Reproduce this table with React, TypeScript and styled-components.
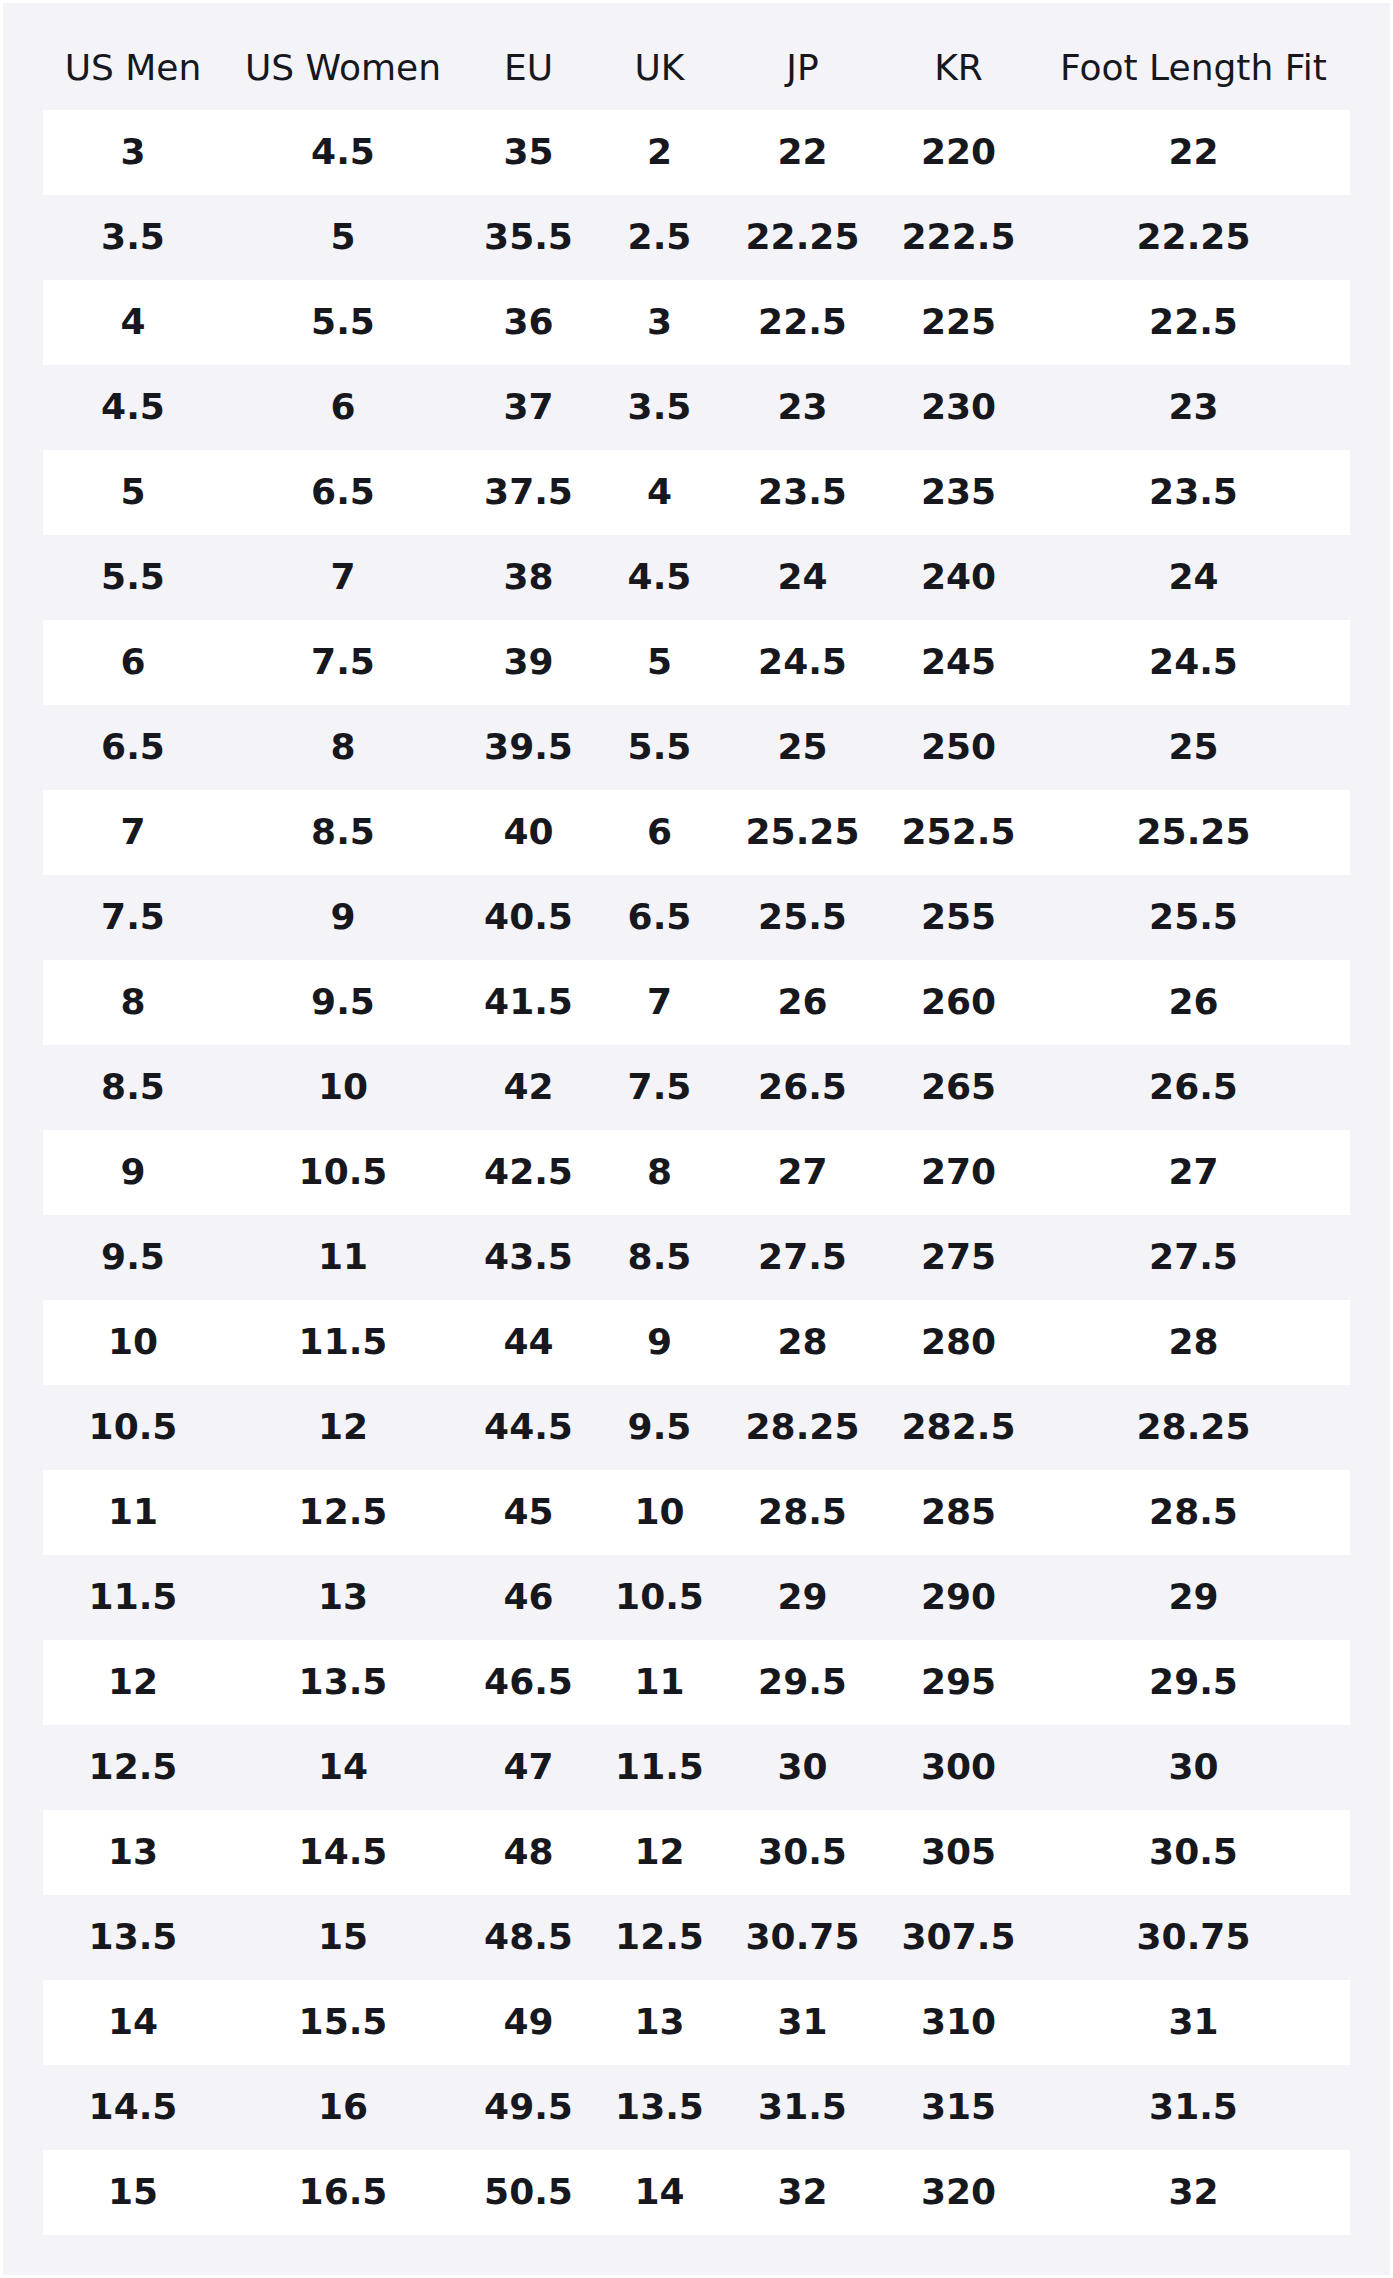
import styled, { createGlobalStyle } from 'styled-components'

const GlobalStyle = createGlobalStyle`
  html, body {
    margin: 0;
    padding: 0;
    background: #ffffff;
  }

  body {
    font-family: "DejaVu Sans", "Liberation Sans", sans-serif;
    color: #17171e;
  }
`

type Row = [string, string, string, string, string, string, string]

const COLUMNS = ['US Men', 'US Women', 'EU', 'UK', 'JP', 'KR', 'Foot Length Fit']

// Column widths measured from the reference, in px
const COLUMN_WIDTHS = [180, 240, 131, 131, 155, 157, 313]

const SIZES: Row[] = [
  ['3', '4.5', '35', '2', '22', '220', '22'],
  ['3.5', '5', '35.5', '2.5', '22.25', '222.5', '22.25'],
  ['4', '5.5', '36', '3', '22.5', '225', '22.5'],
  ['4.5', '6', '37', '3.5', '23', '230', '23'],
  ['5', '6.5', '37.5', '4', '23.5', '235', '23.5'],
  ['5.5', '7', '38', '4.5', '24', '240', '24'],
  ['6', '7.5', '39', '5', '24.5', '245', '24.5'],
  ['6.5', '8', '39.5', '5.5', '25', '250', '25'],
  ['7', '8.5', '40', '6', '25.25', '252.5', '25.25'],
  ['7.5', '9', '40.5', '6.5', '25.5', '255', '25.5'],
  ['8', '9.5', '41.5', '7', '26', '260', '26'],
  ['8.5', '10', '42', '7.5', '26.5', '265', '26.5'],
  ['9', '10.5', '42.5', '8', '27', '270', '27'],
  ['9.5', '11', '43.5', '8.5', '27.5', '275', '27.5'],
  ['10', '11.5', '44', '9', '28', '280', '28'],
  ['10.5', '12', '44.5', '9.5', '28.25', '282.5', '28.25'],
  ['11', '12.5', '45', '10', '28.5', '285', '28.5'],
  ['11.5', '13', '46', '10.5', '29', '290', '29'],
  ['12', '13.5', '46.5', '11', '29.5', '295', '29.5'],
  ['12.5', '14', '47', '11.5', '30', '300', '30'],
  ['13', '14.5', '48', '12', '30.5', '305', '30.5'],
  ['13.5', '15', '48.5', '12.5', '30.75', '307.5', '30.75'],
  ['14', '15.5', '49', '13', '31', '310', '31'],
  ['14.5', '16', '49.5', '13.5', '31.5', '315', '31.5'],
  ['15', '16.5', '50.5', '14', '32', '320', '32'],
]

const StyledWrapper = styled.div`
  margin: 3px;
  padding: 40px;
  background-color: #f4f4f8;
`

const StyledTable = styled.div`
  width: 100%;
  display: flex;
  flex-direction: column;
`

const StyledRow = styled.div<{ $striped?: boolean; $header?: boolean }>`
  display: grid;
  grid-template-columns: ${COLUMN_WIDTHS.map((w) => `${w}fr`).join(' ')};
  background-color: ${(p) => (p.$striped ? '#ffffff' : 'transparent')};
  padding: ${(p) => (p.$header ? '4px 0 22px' : '21px 0 23px')};
`

const StyledHeadCell = styled.div`
  text-align: center;
  font-size: 36px;
  line-height: 41px;
  font-weight: 400;
  white-space: nowrap;
`

const StyledCell = styled.div`
  text-align: center;
  font-size: 36px;
  line-height: 41px;
  font-weight: 700;
  white-space: nowrap;
`

const App: React.FC = () => {
  return (
    <>
      <GlobalStyle />
      <StyledWrapper>
        <StyledTable>
          <StyledRow $header>
            {COLUMNS.map((col) => (
              <StyledHeadCell key={col}>{col}</StyledHeadCell>
            ))}
          </StyledRow>

          {SIZES.map((row, i) => (
            <StyledRow key={row[0]} $striped={i % 2 === 0}>
              {row.map((value, j) => (
                <StyledCell key={j}>{value}</StyledCell>
              ))}
            </StyledRow>
          ))}
        </StyledTable>
      </StyledWrapper>
    </>
  )
}

export default App
